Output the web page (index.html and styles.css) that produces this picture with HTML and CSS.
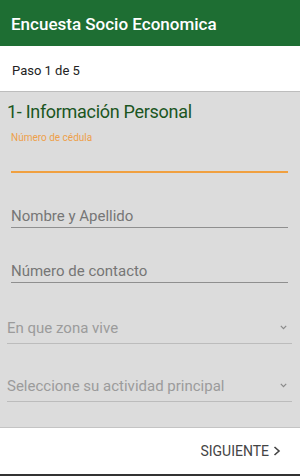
FILE: index.html
```html
<!DOCTYPE html>
<html lang="es">
<head>
    <meta charset="UTF-8">
    <meta name="viewport" content="width=device-width, initial-scale=1.0">
    <title>Encuesta Socio Economica</title>
    <link rel="stylesheet" href="styles.css">
</head>
<body>

<div class="app">
    <header class="toolbar">Encuesta Socio Economica</header>

    <div class="stepper">Paso 1 de 5</div>

    <form class="form">
        <h2 class="section-title">1- Información Personal</h2>

        <div class="field field-active">
            <label class="field-label" for="cedula">Número de cédula</label>
            <input type="text" id="cedula" class="text-input">
        </div>

        <div class="field">
            <input type="text" class="text-input" placeholder="Nombre y Apellido">
        </div>

        <div class="field">
            <input type="text" class="text-input" placeholder="Número de contacto">
        </div>

        <div class="select">
            <span>En que zona vive</span>
            <svg class="select-arrow" width="7" height="5" viewBox="0 0 7 5">
                <path d="M0.8 0.8 L3.5 3.6 L6.2 0.8" fill="none" stroke="#8a8a8a" stroke-width="1.2"/>
            </svg>
        </div>

        <div class="select">
            <span>Seleccione su actividad principal</span>
            <svg class="select-arrow" width="7" height="5" viewBox="0 0 7 5">
                <path d="M0.8 0.8 L3.5 3.6 L6.2 0.8" fill="none" stroke="#8a8a8a" stroke-width="1.2"/>
            </svg>
        </div>
    </form>

    <footer class="footer">
        <button type="button" class="next-btn">
            SIGUIENTE
            <svg width="8" height="10" viewBox="0 0 8 10">
                <path d="M1.5 1 L6 5 L1.5 9" fill="none" stroke="#444" stroke-width="1.6"/>
            </svg>
        </button>
    </footer>
</div>

</body>
</html>
```

FILE: styles.css
```css
* {
    box-sizing: border-box;
}
body {
    margin: 0;
    font-family: Roboto, "Liberation Sans", Arial, sans-serif;
    background-color: #fff;
}
.app {
    display: flex;
    flex-direction: column;
    height: 476px;
    width: 300px;
}
.toolbar {
    flex: none;
    height: 46px;
    background-color: #1e6e33;
    color: #fff;
    font-size: 17px;
    font-weight: 500;
    line-height: 20px;
    padding: 14px 0 0 11px;
}
.stepper {
    flex: none;
    height: 46px;
    background-color: #fff;
    border-bottom: 1px solid #bdbdbd;
    font-size: 13px;
    line-height: 15px;
    color: #222;
    padding: 17px 0 0 12px;
}
.form {
    flex: 1;
    min-height: 0;
    margin: 0;
    background-color: #dcdcdc;
    padding: 9px 8px 0 7px;
}
.section-title {
    margin: 0 0 10px 0;
    font-size: 18px;
    font-weight: 400;
    line-height: 21px;
    letter-spacing: -0.3px;
    color: #1b561f;
    white-space: nowrap;
}
.field {
    margin: 0 4px 32px 4px;
}
.field-label {
    display: block;
    font-size: 10px;
    line-height: 12px;
    color: #eea04a;
    margin-bottom: 5px;
}
.text-input {
    display: block;
    width: 100%;
    height: 23px;
    padding: 0;
    border: none;
    border-bottom: 1px solid #8f8f8f;
    background: transparent;
    font-family: inherit;
    font-size: 15px;
    line-height: 18px;
    color: #333;
    outline: none;
}
.text-input::placeholder {
    color: #767676;
}
.field-active .text-input {
    height: 24px;
    border-bottom: 2px solid #f0a040;
}
.select {
    display: flex;
    justify-content: space-between;
    align-items: center;
    height: 29px;
    padding: 4px 5px 6px 0;
    border-bottom: 1px solid #bcbcbc;
    font-size: 15px;
    line-height: 18px;
    color: #9b9b9b;
    margin-bottom: 29px;
}
.select:last-child {
    margin-bottom: 0;
}
.select-arrow {
    margin-top: -1px;
}
.footer {
    flex: none;
    height: 49px;
    background-color: #fff;
    border-top: 1px solid #c4c4c4;
    border-bottom: 2px solid #333;
    display: flex;
    justify-content: flex-end;
    align-items: center;
    padding-right: 19px;
}
.next-btn {
    display: flex;
    align-items: center;
    gap: 4px;
    border: none;
    background: none;
    padding: 0;
    font-family: inherit;
    font-size: 14px;
    color: #444;
    cursor: pointer;
}
```
